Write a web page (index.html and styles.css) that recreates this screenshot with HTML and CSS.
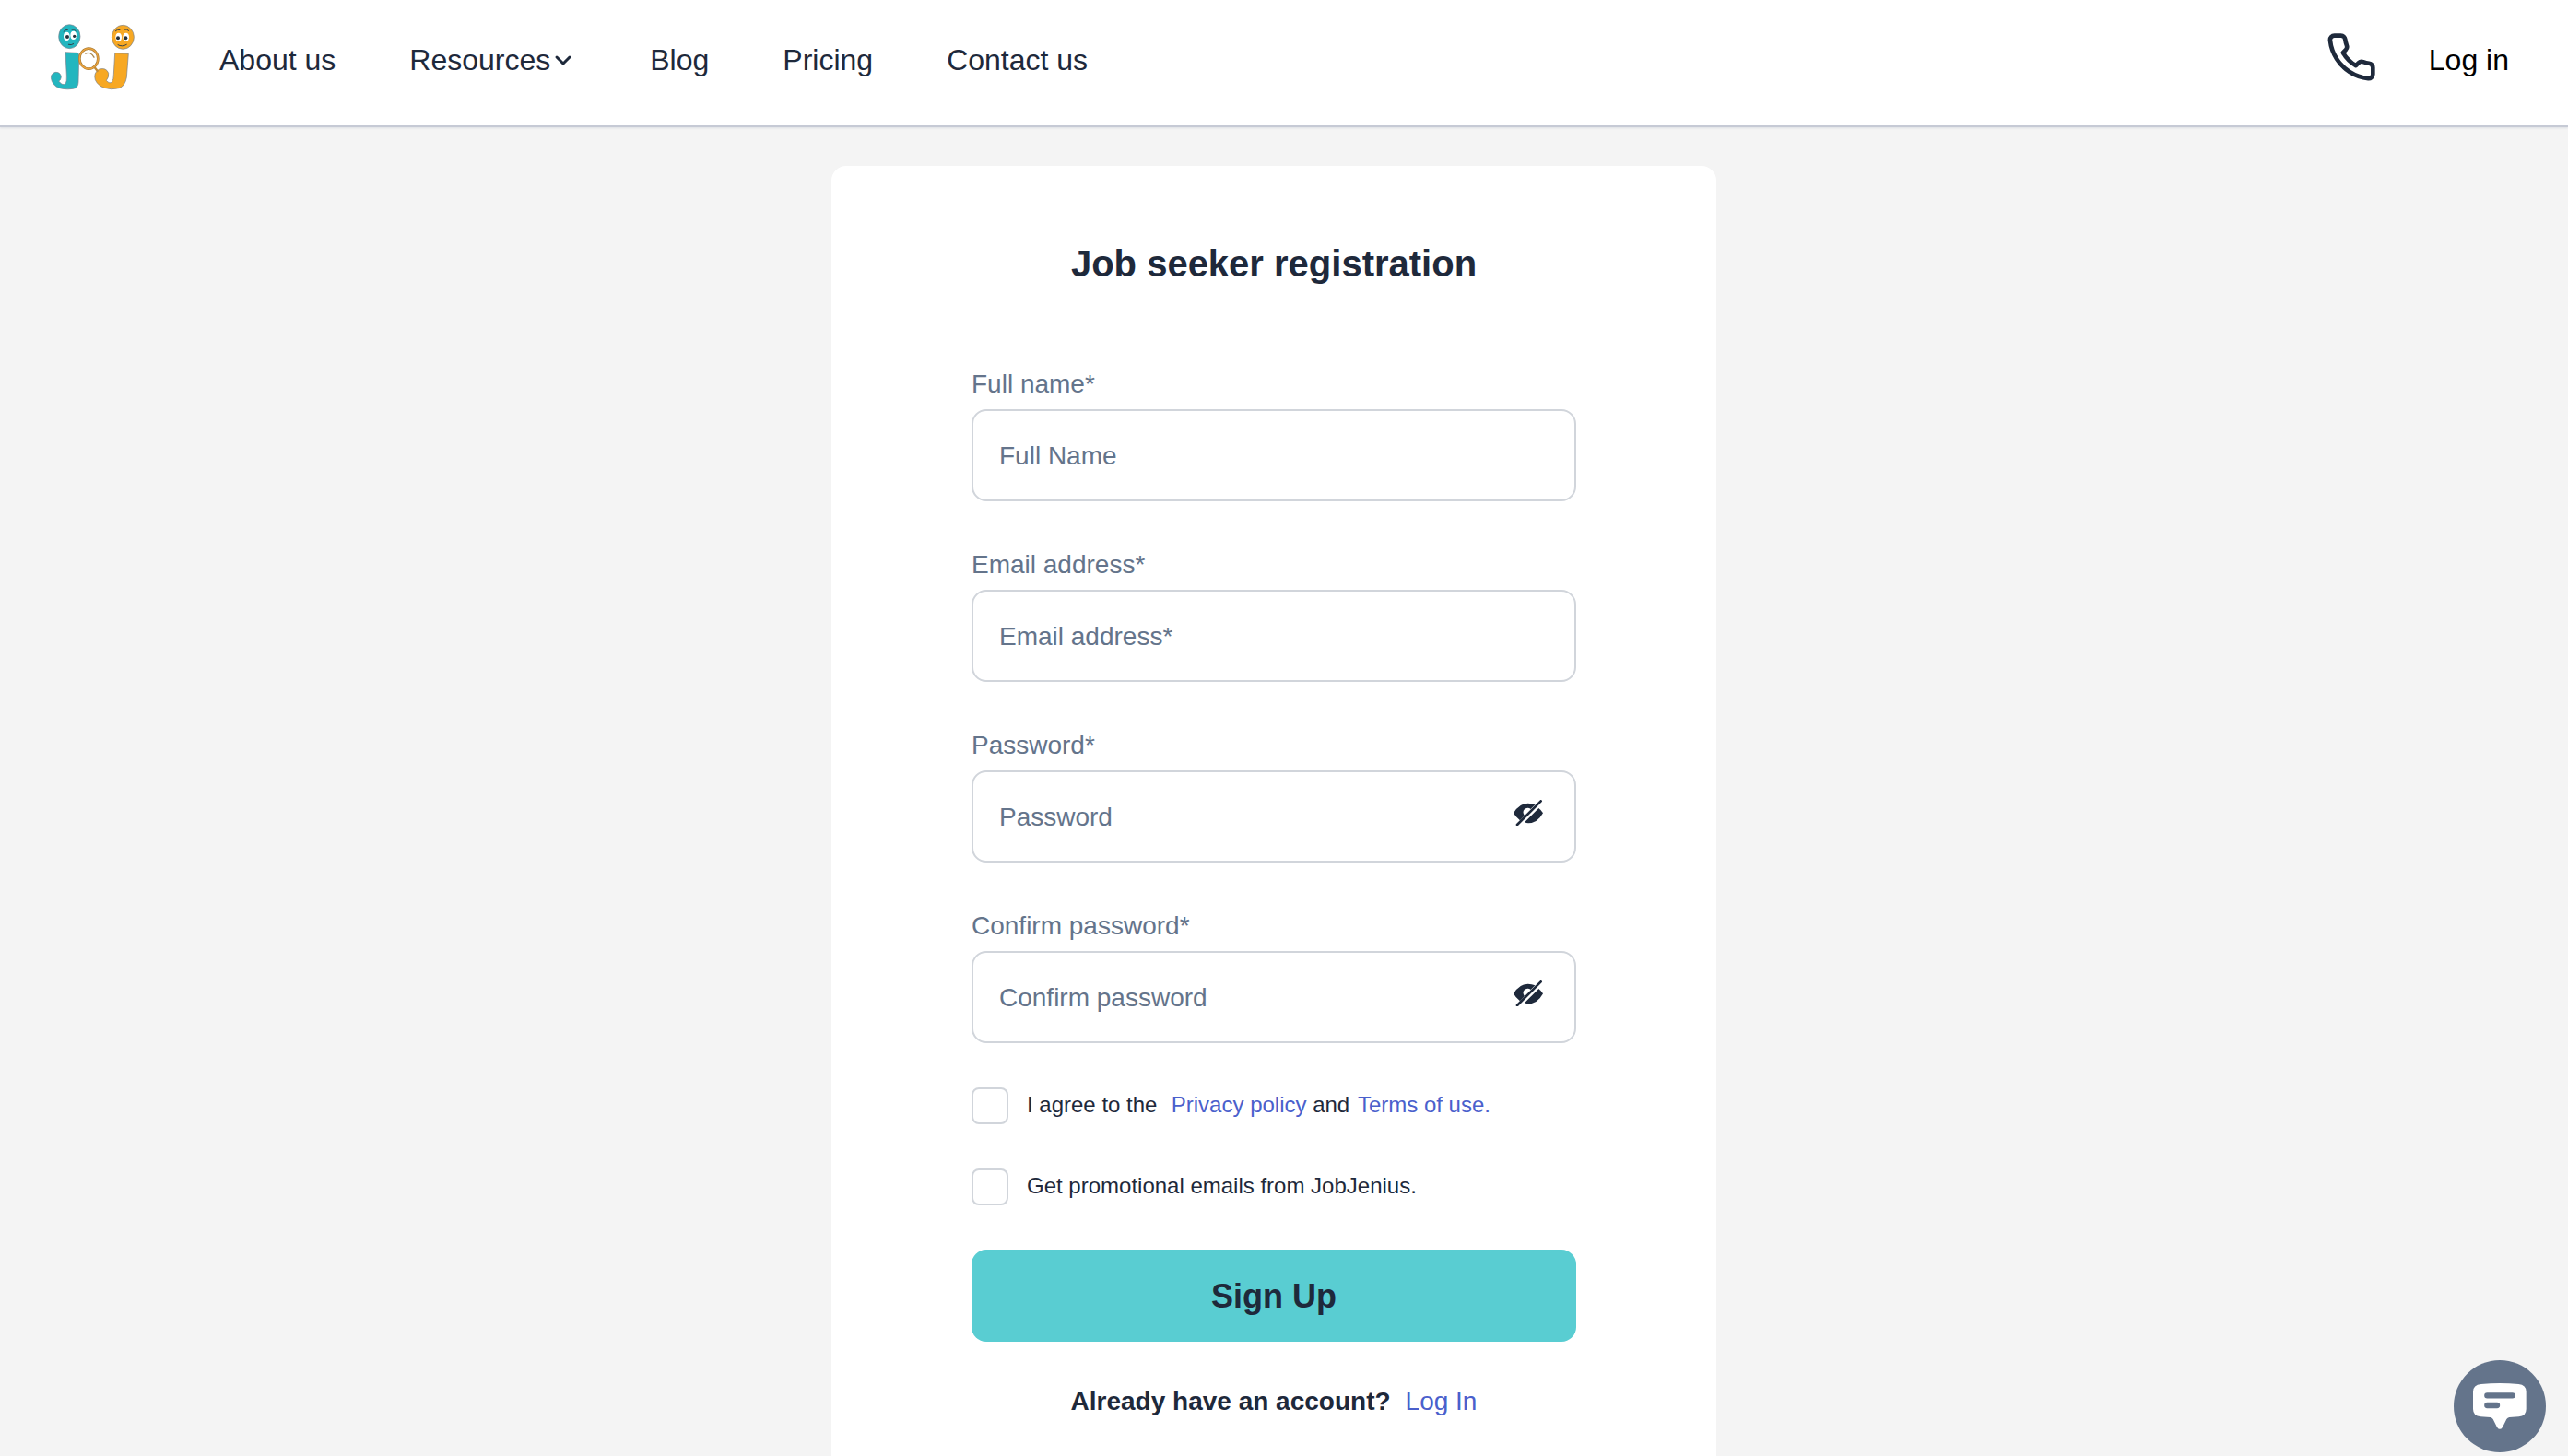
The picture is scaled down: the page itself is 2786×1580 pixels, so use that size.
FILE: index.html
```html
<!DOCTYPE html>
<html lang="en">
<head>
<meta charset="utf-8">
<meta name="viewport" content="width=device-width, initial-scale=1">
<title>Job seeker registration</title>
<link rel="stylesheet" href="styles.css">
</head>
<body>
<svg class="sprite" aria-hidden="true">
  <symbol id="eye-off" viewBox="126 144 96 84">
    <path d="M126 187Q144 155 173 155Q186 155 196 160L182 174A14 14 0 1 0 162 195L147 211Q133 200 126 187Z"/>
    <path d="M162 217L208 171Q216 177 222 187Q204 220 174 220Q168 220 162 217Z"/>
    <path d="M138 225L215 148" fill="none" stroke="currentColor" stroke-width="8" stroke-linecap="round"/>
  </symbol>
</svg>
<header class="header">
  <a class="logo" href="#" aria-label="JobJenius home">
    <svg viewBox="24 30 312 252" width="104" height="84" aria-hidden="true">
      <g stroke="#77818c" stroke-width="2">
        <path fill="#23b6bf" d="M93 140L131 142Q138 143 137 156L135 238Q134 256 119 259Q100 262 82 259Q58 255 49 235Q40 211 60 205Q77 204 79 221Q78 231 71 234Q82 249 93 243Q98 236 97 217Z"/>
        <path fill="#f7a823" d="M254 143L298 145L292 222Q287 250 268 257Q242 264 219 256Q198 248 190 230Q183 207 203 195Q226 189 233 208Q235 222 226 232Q236 244 244 237Q250 230 250 212Z"/>
        <ellipse cx="106" cy="89" rx="35" ry="39" fill="#23b6bf"/>
        <ellipse cx="280" cy="91" rx="36" ry="39" fill="#f7a823"/>
      </g>
      <g fill="#fff">
        <ellipse cx="97" cy="88" rx="10" ry="14"/><ellipse cx="119" cy="85" rx="10" ry="14"/>
        <ellipse cx="266" cy="91" rx="10" ry="14"/><ellipse cx="290" cy="91" rx="10" ry="14"/>
      </g>
      <g fill="#25313b">
        <circle cx="99" cy="90" r="6"/><circle cx="122" cy="88" r="5"/>
        <circle cx="264" cy="94" r="6"/><circle cx="289" cy="94" r="6"/>
      </g>
      <g fill="none" stroke="#344048" stroke-width="3" stroke-linecap="round">
        <path d="M87 73Q92 66 100 67M114 66Q122 64 127 71M103 115Q112 118 119 113"/>
        <path d="M256 71Q262 64 270 67M284 66Q293 64 299 70M264 116Q277 124 292 115"/>
      </g>
      <ellipse cx="169" cy="161" rx="30" ry="33" fill="#fff" stroke="#a77c35" stroke-width="8"/>
      <ellipse cx="169" cy="161" rx="30" ry="33" fill="none" stroke="#eda33e" stroke-width="4"/>
      <path d="M157 145Q175 135 187 158" fill="none" stroke="#a8854b" stroke-width="4"/>
      <path d="M187 188L199 203" fill="none" stroke="#c18b37" stroke-width="7"/>
    </svg>
  </a>
  <nav class="nav" aria-label="Main">
    <a href="#">About us</a>
    <a class="nav-menu" href="#">Resources<svg class="chevron" viewBox="0 0 28 20" width="28" height="20" aria-hidden="true"><path d="M7 7L14 14L21 7"/></svg></a>
    <a href="#">Blog</a>
    <a href="#">Pricing</a>
    <a href="#">Contact us</a>
  </nav>
  <div class="account">
    <a class="phone" href="#" aria-label="Call us">
      <svg viewBox="0 0 24 24" width="56" height="56" fill="none" stroke="currentColor" stroke-width="2" stroke-linecap="round" stroke-linejoin="round" aria-hidden="true"><path d="M22 16.92v3a2 2 0 0 1-2.18 2 19.79 19.79 0 0 1-8.63-3.07 19.5 19.5 0 0 1-6-6 19.79 19.79 0 0 1-3.07-8.67A2 2 0 0 1 4.11 2h3a2 2 0 0 1 2 1.72 12.84 12.84 0 0 0 .7 2.81 2 2 0 0 1-.45 2.11L8.09 9.91a16 16 0 0 0 6 6l1.27-1.27a2 2 0 0 1 2.11-.45 12.84 12.84 0 0 0 2.81.7A2 2 0 0 1 22 16.92z"/></svg>
    </a>
    <a class="login" href="#">Log in</a>
  </div>
</header>
<main class="page">
  <section class="card">
    <h1 class="title">Job seeker registration</h1>
    <form class="form">
      <div class="field">
        <label for="name">Full name*</label>
        <input id="name" type="text" placeholder="Full Name">
      </div>
      <div class="field">
        <label for="email">Email address*</label>
        <input id="email" type="email" placeholder="Email address*">
      </div>
      <div class="field">
        <label for="password">Password*</label>
        <div class="secret">
          <input id="password" type="password" placeholder="Password">
          <button class="reveal" type="button" aria-label="Show password"><svg width="32" height="28"><use href="#eye-off"/></svg></button>
        </div>
      </div>
      <div class="field">
        <label for="confirm">Confirm password*</label>
        <div class="secret">
          <input id="confirm" type="password" placeholder="Confirm password">
          <button class="reveal" type="button" aria-label="Show confirmed password"><svg width="32" height="28"><use href="#eye-off"/></svg></button>
        </div>
      </div>
      <div class="check">
        <input id="agree" type="checkbox">
        <label for="agree">I agree to the &nbsp;<a href="#">Privacy policy</a> and <a href="#">Terms of use.</a></label>
      </div>
      <div class="check">
        <input id="promo" type="checkbox">
        <label for="promo">Get promotional emails from JobJenius.</label>
      </div>
      <button class="submit" type="submit">Sign Up</button>
      <p class="existing"><strong>Already have an account?</strong> <a href="#">Log In</a></p>
    </form>
  </section>
</main>
<button class="chat" type="button" aria-label="Open chat">
  <svg viewBox="66 78 300 300" width="100" height="100" aria-hidden="true">
    <path fill="#fff" d="M155 156Q216 150 277 156Q302 158 302 181V237Q302 260 278 262L247 264Q241 265 238 270L225 296Q216 309 207 296L194 270Q191 265 185 264L154 262Q129 260 129 237V181Q129 158 155 156Z"/>
    <path d="M175 193H257M175 225H207" stroke="#64748b" stroke-width="19" stroke-linecap="round"/>
  </svg>
</button>
</body>
</html>
```
FILE: styles.css
```css
* {
  box-sizing: border-box;
}

body {
  display: flex;
  flex-direction: column;
  min-height: 100vh;
  margin: 0;
  background: #f4f4f4;
  color: #1e293b;
  font-family: "Liberation Sans", Arial, sans-serif;
  font-size: 28px;
}

a {
  color: #4a60cc;
  text-decoration: none;
}

button,
input {
  font: inherit;
  color: inherit;
}

svg {
  display: block;
}

.sprite {
  position: absolute;
  width: 0;
  height: 0;
}

.header {
  display: flex;
  align-items: center;
  padding: 20px 64px 32px 48px;
  border-bottom: 2px solid #c6cad5;
  box-shadow: 0 1px 2px #dcdfe4;
  background: #fff;
  font-size: 32px;
  line-height: 56px;
}

.header a {
  color: #1e293b;
}

.nav {
  display: flex;
  gap: 80px;
  margin-left: 86px;
  padding-top: 6px;
}

.nav-menu {
  display: flex;
  align-items: center;
}

.chevron {
  fill: none;
  stroke: currentColor;
  stroke-width: 3;
  stroke-linecap: round;
  stroke-linejoin: round;
}

.account {
  display: flex;
  align-items: center;
  gap: 56px;
  margin-left: auto;
}

.header .login {
  padding-top: 6px;
  color: #000;
}

.page {
  display: flex;
  flex: 1;
  justify-content: center;
  padding: 42px 22px 0 0;
}

.card {
  width: 960px;
  padding: 80px 152px 42px;
  border-radius: 16px 16px 0 0;
  background: #fff;
}

.title {
  margin: 0 0 84px;
  font-size: 40px;
  line-height: 52px;
  text-align: center;
}

.form {
  display: flex;
  flex-direction: column;
  gap: 48px;
}

.field {
  display: flex;
  flex-direction: column;
  gap: 6px;
  color: #64748b;
  line-height: 42px;
}

.field input {
  width: 100%;
  height: 100px;
  padding: 2px 28px 0;
  border: 2px solid #d1d5db;
  border-radius: 16px;
  background: #fff;
}

.field input::placeholder {
  color: #64748b;
  opacity: 1;
}

.secret {
  position: relative;
}

.reveal {
  position: absolute;
  top: 32px;
  right: 36px;
  padding: 0;
  border: 0;
  background: none;
  color: #1e293b;
  fill: currentColor;
}

.check {
  display: flex;
  gap: 20px;
  font-size: 24px;
  line-height: 38px;
}

.check a {
  margin-left: 2px;
}

.check input {
  appearance: none;
  width: 40px;
  height: 40px;
  margin: 0;
  border: 2px solid #d1d5db;
  border-radius: 8px;
  background: #fff;
}

.submit {
  height: 100px;
  padding: 2px 0 0;
  border: 0;
  border-radius: 16px;
  background: #59cdd2;
  font-size: 36px;
  font-weight: 700;
}

.existing {
  display: flex;
  justify-content: center;
  gap: 16px;
  margin: 0;
  line-height: 34px;
}

.chat {
  position: fixed;
  right: 24px;
  bottom: 4px;
  padding: 0;
  border: 0;
  border-radius: 50%;
  background: #64748b;
}
```
